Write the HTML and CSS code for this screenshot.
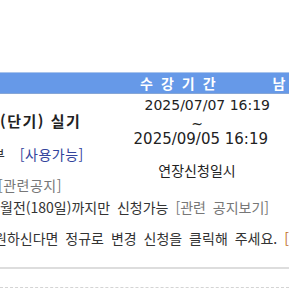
FILE: index.html
```html
<!DOCTYPE html>
<html lang="ko">
<head>
    <meta charset="UTF-8">
    <meta name="viewport" content="width=device-width, initial-scale=1.0">
    <title>수강기간</title>
    <link rel="stylesheet" href="styles.css">
</head>
<body>
    <div class="page">
        <div class="head">
            <span class="head-period">수강기간</span>
            <span class="head-left">남은기간</span>
        </div>

        <div class="course">
            <div class="info">
                <div class="title">(단기) 실기</div>
                <div class="usable"><span class="cut">부</span> <span class="state">[사용가능]</span></div>
                <div class="notice">[관련공지]</div>
            </div>
            <div class="period">
                <div class="date">2025/07/07 16:19</div>
                <div class="tilde">~</div>
                <div class="date date-end">2025/09/05 16:19</div>
                <div class="extend">연장신청일시</div>
            </div>
        </div>

        <p class="rule rule-first">월전(180일)까지만 신청가능 <span class="link">[관련 공지보기]</span></p>
        <p class="rule rule-second">원하신다면 정규로 변경 신청을 클릭해 주세요. <span class="change">[정규로 변경]</span></p>

        <div class="line"></div>
        <div class="dashed"></div>
    </div>
</body>
</html>
```

FILE: styles.css
```css
body {
    margin: 0;
    background-color: white;
    color: #333;
    font-family: "Noto Sans CJK KR", "DejaVu Sans", sans-serif;
    overflow: hidden;
}
.page {
    width: 289px;
    height: 289px;
    padding-top: 72px;
    box-sizing: border-box;
    overflow: hidden;
}
.head {
    display: flex;
    align-items: center;
    height: 20px;
    background-color: #6699e8;
    border-top: 1px solid #a9c4ec;
    border-bottom: 1px solid #86a6d6;
    color: white;
    font-size: 14px;
    font-weight: bold;
    letter-spacing: 8px;
    white-space: nowrap;
}
.head-period {
    margin-left: 140px;
}
.head-left {
    margin-left: 49px;
}
.course {
    display: flex;
}
.info {
    width: 128px;
    font-size: 14px;
    white-space: nowrap;
}
.title {
    margin-top: 17px;
    line-height: 20px;
    font-size: 15px;
    font-weight: bold;
    color: #222;
    letter-spacing: 1.5px;
}
.usable {
    margin-top: 13px;
    line-height: 20px;
    margin-left: -8px;
}
.state {
    margin-left: 11px;
    color: #33449c;
    letter-spacing: 0.5px;
}
.notice {
    margin-top: 11px;
    line-height: 20px;
    margin-left: -2px;
    color: #777;
    letter-spacing: 0.5px;
}
.period {
    width: 142px;
    color: #222;
}
.date {
    margin-top: 4px;
    font-family: "DejaVu Sans", sans-serif;
    font-size: 14px;
    line-height: 14px;
    text-align: right;
}
.date-end {
    margin-top: 0;
    padding-right: 2px;
    font-size: 15px;
    line-height: 16px;
}
.tilde {
    padding-top: 6px;
    padding-right: 4px;
    font-family: "DejaVu Sans", sans-serif;
    font-size: 14px;
    line-height: 13px;
    text-align: center;
}
.extend {
    margin-top: 14px;
    padding-right: 4px;
    font-size: 14px;
    line-height: 18px;
    text-align: center;
}
.rule {
    margin: 0;
    font-size: 14px;
    line-height: 20px;
    white-space: nowrap;
    word-spacing: 3px;
}
.rule-first {
    margin-top: 2px;
}
.rule-second {
    margin-top: 11px;
    margin-left: -6px;
}
.link {
    color: #777;
}
.change {
    color: #c0702a;
}
.line {
    margin-top: 19px;
    border-top: 2px solid #ddd;
}
.dashed {
    margin-top: 18px;
    border-top: 1px dashed #d4d4d4;
}
```
